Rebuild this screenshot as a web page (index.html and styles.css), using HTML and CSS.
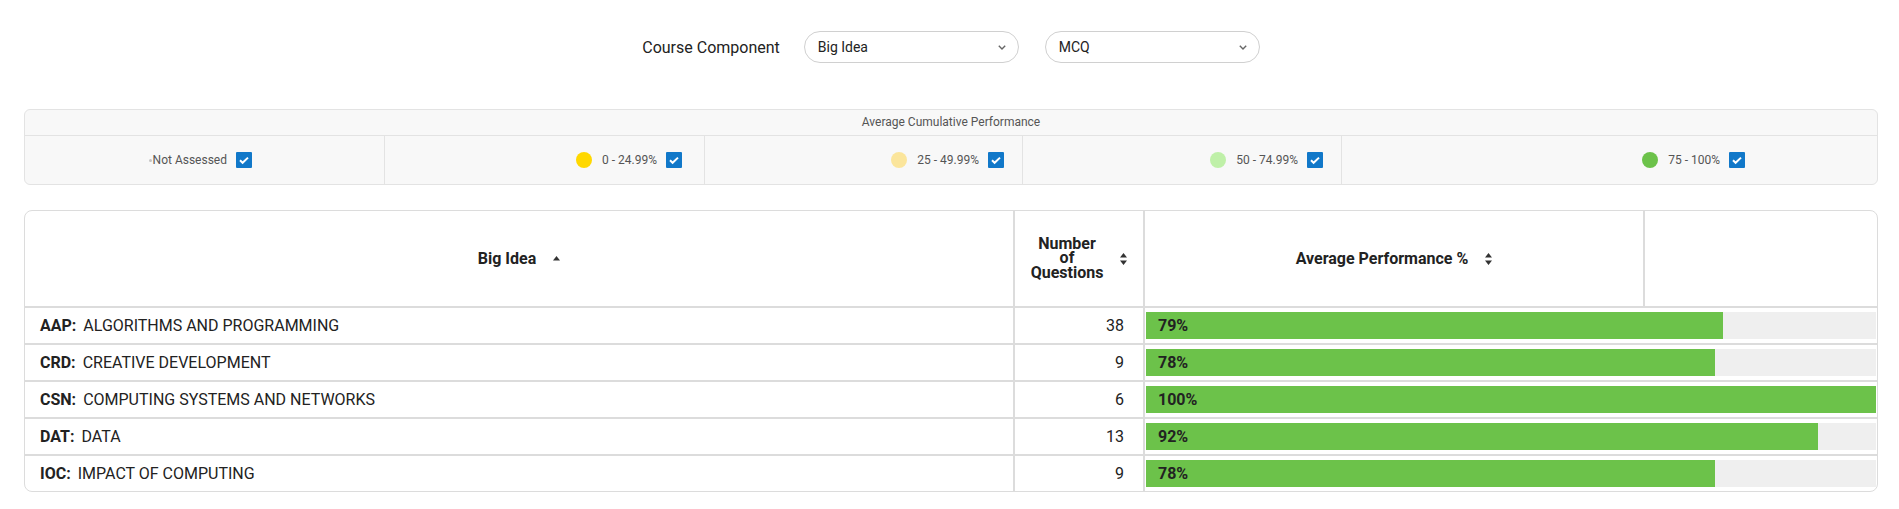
FILE: index.html
```html
<!DOCTYPE html>
<html lang="en">
<head>
<meta charset="utf-8">
<title>Course Component</title>
<link rel="stylesheet" href="styles.css">
</head>
<body>
<div class="page">
  <div class="filters">
    <span class="filter-label">Course Component</span>
    <div class="select"><span>Big Idea</span><svg class="chev" viewBox="0 0 8 5"><path d="M0.8 0.8L4 4L7.2 0.8" fill="none" stroke="#666" stroke-width="1.4"/></svg></div>
    <div class="select select-second"><span>MCQ</span><svg class="chev" viewBox="0 0 8 5"><path d="M0.8 0.8L4 4L7.2 0.8" fill="none" stroke="#666" stroke-width="1.4"/></svg></div>
  </div>

  <div class="legend">
    <div class="legend-title">Average Cumulative Performance</div>
    <div class="legend-row">
      <div class="legend-cell c1"><span class="tiny-dot"></span><span class="legend-text">Not Assessed</span><span class="check"><svg viewBox="0 0 16 16"><path d="M4 8.3l2.6 2.5L12 5.6" fill="none" stroke="#fff" stroke-width="2"/></svg></span></div>
      <div class="legend-cell c2"><span class="dot dot-yellow"></span><span class="legend-text">0 - 24.99%</span><span class="check"><svg viewBox="0 0 16 16"><path d="M4 8.3l2.6 2.5L12 5.6" fill="none" stroke="#fff" stroke-width="2"/></svg></span></div>
      <div class="legend-cell c3"><span class="dot dot-lightyellow"></span><span class="legend-text">25 - 49.99%</span><span class="check"><svg viewBox="0 0 16 16"><path d="M4 8.3l2.6 2.5L12 5.6" fill="none" stroke="#fff" stroke-width="2"/></svg></span></div>
      <div class="legend-cell c4"><span class="dot dot-lightgreen"></span><span class="legend-text">50 - 74.99%</span><span class="check"><svg viewBox="0 0 16 16"><path d="M4 8.3l2.6 2.5L12 5.6" fill="none" stroke="#fff" stroke-width="2"/></svg></span></div>
      <div class="legend-cell c5"><span class="dot dot-green"></span><span class="legend-text">75 - 100%</span><span class="check"><svg viewBox="0 0 16 16"><path d="M4 8.3l2.6 2.5L12 5.6" fill="none" stroke="#fff" stroke-width="2"/></svg></span></div>
    </div>
  </div>

  <div class="table">
    <div class="thead">
      <div class="th"><span class="th-text">Big Idea</span><svg class="sort-up" viewBox="0 0 7 5"><path d="M3.5 0L7 4.5H0z" fill="#333"/></svg></div>
      <div class="th"><span class="th-text th-stack"><span class="th-line">Number</span><span class="th-line">of</span><span class="th-line">Questions</span></span><svg class="sort" viewBox="0 0 7 12"><path d="M3.5 0L7 4.6H0z M3.5 12L0 7.4h7z" fill="#333"/></svg></div>
      <div class="th"><span class="th-text">Average Performance %</span><svg class="sort" viewBox="0 0 7 12"><path d="M3.5 0L7 4.6H0z M3.5 12L0 7.4h7z" fill="#333"/></svg></div>
      <div class="th"></div>
    </div>
    <div class="trow">
      <div class="td td-name"><b class="code">AAP:</b>ALGORITHMS AND PROGRAMMING</div>
      <div class="td td-num">38</div>
      <div class="td td-bar"><div class="track"><div class="fill" style="width:79%">79%</div></div></div>
    </div>
    <div class="trow">
      <div class="td td-name"><b class="code">CRD:</b>CREATIVE DEVELOPMENT</div>
      <div class="td td-num">9</div>
      <div class="td td-bar"><div class="track"><div class="fill" style="width:78%">78%</div></div></div>
    </div>
    <div class="trow">
      <div class="td td-name"><b class="code">CSN:</b>COMPUTING SYSTEMS AND NETWORKS</div>
      <div class="td td-num">6</div>
      <div class="td td-bar"><div class="track"><div class="fill" style="width:100%">100%</div></div></div>
    </div>
    <div class="trow">
      <div class="td td-name"><b class="code">DAT:</b>DATA</div>
      <div class="td td-num">13</div>
      <div class="td td-bar"><div class="track"><div class="fill" style="width:92%">92%</div></div></div>
    </div>
    <div class="trow">
      <div class="td td-name"><b class="code">IOC:</b>IMPACT OF COMPUTING</div>
      <div class="td td-num">9</div>
      <div class="td td-bar"><div class="track"><div class="fill" style="width:78%">78%</div></div></div>
    </div>
  </div>
</div>
</body>
</html>
```

FILE: styles.css
```css
* { box-sizing: border-box; margin: 0; padding: 0; }
body { font-family: Roboto, "Liberation Sans", Arial, sans-serif; color: #222; background: #fff; }
.page { padding: 31px 21px 0 24px; }

.filters { display: flex; justify-content: center; align-items: center; gap: 24px; height: 32px; }
.filter-label { font-size: 16px; color: #222; }
.select { width: 215px; height: 32px; border: 1px solid #d0d0d0; border-radius: 16px; display: flex; align-items: center; justify-content: space-between; padding: 0 12px 0 13px; font-size: 14px; color: #222; background: #fff; }
.select-second { margin-left: 2px; }
.chev { width: 8px; height: 5px; display: block; }

.legend { margin-top: 46px; border: 1px solid #e3e3e3; border-radius: 6px; background: #f8f8f8; font-size: 12px; color: #555; }
.legend-title { height: 26px; line-height: 25px; text-align: center; border-bottom: 1px solid #e3e3e3; }
.legend-row { display: grid; grid-template-columns: 360px 320px 318px 319px 1fr; height: 48px; }
.legend-cell { display: flex; align-items: center; justify-content: flex-end; border-right: 1px solid #e3e3e3; }
.legend-cell:last-child { border-right: none; }
.c1 { padding-right: 132px; }
.c2 { padding-right: 22px; }
.c3 { padding-right: 18px; }
.c4 { padding-right: 18px; }
.c5 { padding-right: 132px; }
.tiny-dot { width: 3px; height: 3px; border-radius: 50%; background: #c4c4c4; margin-right: 1px; }
.dot { width: 16px; height: 16px; border-radius: 50%; margin-right: 10px; }
.dot-yellow { background: #ffd800; }
.dot-lightyellow { background: #fbe59b; }
.dot-lightgreen { background: #bff0a8; }
.dot-green { background: #6cc24a; }
.legend-text { margin-right: 9px; }
.check { width: 16px; height: 16px; background: #1178c9; border-radius: 1px; display: block; }
.check svg { width: 16px; height: 16px; display: block; }

.table { margin-top: 25px; border: 1px solid #dcdcdc; border-radius: 8px; overflow: hidden; }
.thead { display: grid; grid-template-columns: 990px 130px 500px 1fr; height: 97px; border-bottom: 2px solid #dcdcdc; }
.th { display: flex; align-items: center; justify-content: center; gap: 17px; border-right: 2px solid #dcdcdc; font-size: 16px; font-weight: 700; color: #222; }
.th:last-child { border-right: none; }
.th-text { text-align: center; }
.th-stack { display: flex; flex-direction: column; align-items: center; }
.th-line { display: block; height: 14.5px; line-height: 14.5px; }
.sort { width: 7px; height: 12px; display: block; }
.sort-up { width: 7px; height: 5px; display: block; }

.trow { display: grid; grid-template-columns: 990px 130px 1fr; height: 37px; border-bottom: 2px solid #dcdcdc; }
.trow:last-child { height: 35px; border-bottom: none; }
.td { display: flex; align-items: center; border-right: 2px solid #dcdcdc; font-size: 16px; color: #222; }
.td:last-child { border-right: none; }
.td-name { padding-left: 15px; }
.code { font-weight: 700; margin-right: 7px; }
.td-num { justify-content: flex-end; padding-right: 19px; }
.td-bar { padding: 4px 1px 4px 1px; }
.track { width: 100%; height: 27px; background: #efefef; }
.fill { height: 100%; background: #6cc24a; display: flex; align-items: center; padding-left: 12px; font-weight: 700; color: #222; white-space: nowrap; }
```
